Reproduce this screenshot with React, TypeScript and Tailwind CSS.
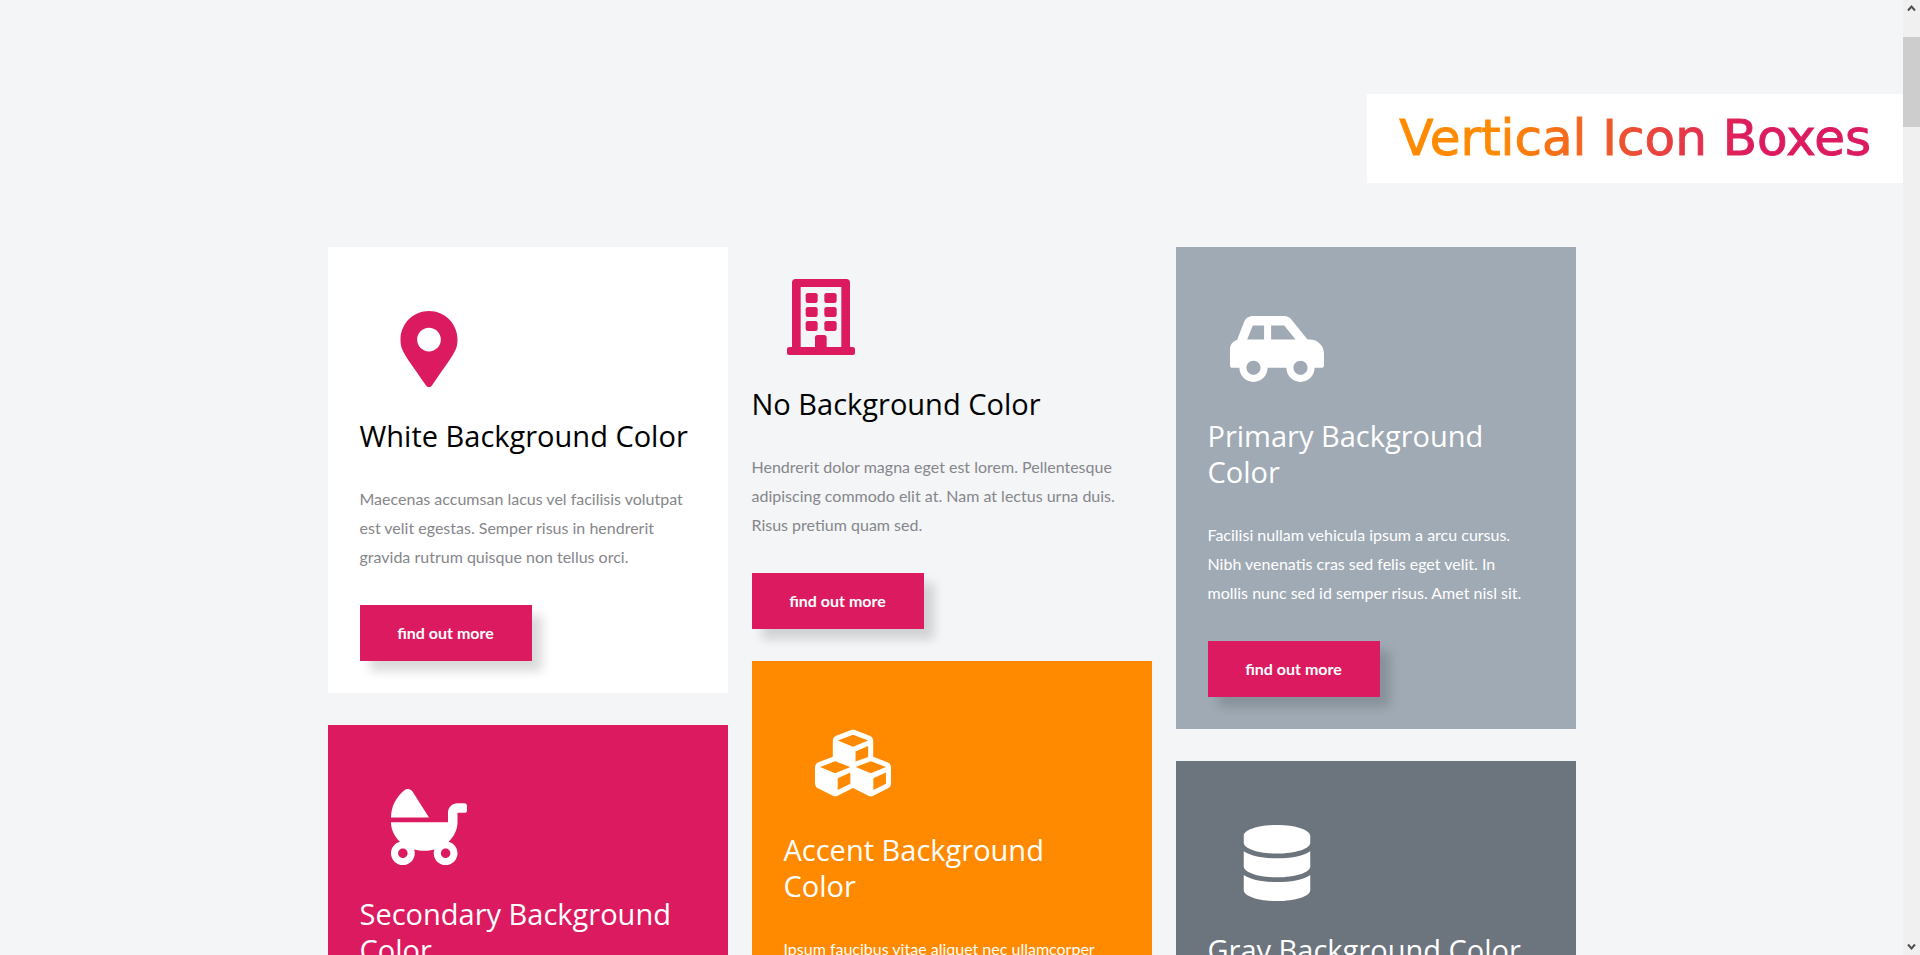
import type { ReactNode } from 'react';
import { FaBabyCarriage, FaCarSide, FaCubes, FaDatabase, FaMapMarkerAlt } from 'react-icons/fa';

type Box = {
  title: string;
  text: string;
  icon: ReactNode;
  card: string;
  iconColor: string;
  titleColor: string;
  textColor: string;
};

function BuildingIcon() {
  return (
    <svg viewBox="0 0 204 228" className="h-[76px] w-[68px]" fill="currentColor" aria-hidden="true">
      <path
        fillRule="evenodd"
        d="M26 0H178Q189 0 189 11V204H197Q204 204 204 211V222Q204 228 198 228H6Q0 228 0 222V211Q0 204 7 204H15V11Q15 0 26 0ZM41 24V204H84V176Q84 168 92 168H111Q119 168 119 176V204H163V24Z"
      />
      <rect x="56" y="42" width="36" height="30" rx="7" />
      <rect x="112" y="42" width="37" height="30" rx="7" />
      <rect x="56" y="84" width="36" height="30" rx="7" />
      <rect x="112" y="84" width="37" height="30" rx="7" />
      <rect x="56" y="126" width="36" height="30" rx="7" />
      <rect x="112" y="126" width="37" height="30" rx="7" />
    </svg>
  );
}

const faIcon = 'size-[76px]';

const columns: Box[][] = [
  [
    {
      title: 'White Background Color',
      text: 'Maecenas accumsan lacus vel facilisis volutpat est velit egestas. Semper risus in hendrerit gravida rutrum quisque non tellus orci.',
      icon: <FaMapMarkerAlt className={faIcon} />,
      card: 'bg-white p-8',
      iconColor: 'text-[#dc1a60]',
      titleColor: 'text-black',
      textColor: 'text-[#86868b]',
    },
    {
      title: 'Secondary Background Color',
      text: 'Sed vulputate odio ut enim blandit volutpat maecenas. Amet nisl purus in mollis nunc sed id semper.',
      icon: <FaBabyCarriage className={faIcon} />,
      card: 'bg-[#dc1a60] p-8',
      iconColor: 'text-white',
      titleColor: 'text-white',
      textColor: 'text-white',
    },
  ],
  [
    {
      title: 'No Background Color',
      text: 'Hendrerit dolor magna eget est lorem. Pellentesque adipiscing commodo elit at. Nam at lectus urna duis. Risus pretium quam sed.',
      icon: <BuildingIcon />,
      card: '',
      iconColor: 'text-[#dc1a60]',
      titleColor: 'text-black',
      textColor: 'text-[#86868b]',
    },
    {
      title: 'Accent Background Color',
      text: 'Ipsum faucibus vitae aliquet nec ullamcorper sit amet risus. Viverra orci sagittis eu volutpat odio.',
      icon: <FaCubes className={faIcon} />,
      card: 'bg-[#ff8a00] p-8',
      iconColor: 'text-white',
      titleColor: 'text-white',
      textColor: 'text-white',
    },
  ],
  [
    {
      title: 'Primary Background Color',
      text: 'Facilisi nullam vehicula ipsum a arcu cursus. Nibh venenatis cras sed felis eget velit. In mollis nunc sed id semper risus. Amet nisl sit.',
      icon: <FaCarSide className="h-[76px] w-[94px]" />,
      card: 'bg-[#9faab4] p-8',
      iconColor: 'text-white',
      titleColor: 'text-white',
      textColor: 'text-white',
    },
    {
      title: 'Gray Background Color',
      text: 'Turpis egestas pretium aenean pharetra magna ac placerat vestibulum lectus mauris ultrices.',
      icon: <FaDatabase className={faIcon} />,
      card: 'bg-[#6c747d] p-8',
      iconColor: 'text-white',
      titleColor: 'text-white',
      textColor: 'text-white',
    },
  ],
];

function IconBox({ box }: { box: Box }) {
  return (
    <article className={box.card}>
      <div className={`flex h-[139px] w-[138px] items-center justify-center pt-px ${box.iconColor}`}>{box.icon}</div>
      <h3 className={`font-['Open_Sans',sans-serif] text-[29px] leading-9 ${box.titleColor}`}>{box.title}</h3>
      <p className={`mt-[30px] mb-[34px] pr-2 text-base leading-[29px] ${box.textColor}`}>{box.text}</p>
      <a
        href="#"
        className="flex h-14 w-[172px] items-center justify-center bg-[#dc1a60] text-base font-bold text-white shadow-[10px_10px_10px_rgba(0,0,0,0.15)]"
      >
        find out more
      </a>
    </article>
  );
}

function ScrollRail() {
  return (
    <div className="flex w-[17px] shrink-0 flex-col items-center justify-between bg-[#f0f0f0]" aria-hidden="true">
      <div className="flex w-full flex-col items-center">
        <svg viewBox="0 0 17 17" className="mb-5 h-[17px] w-[17px]" fill="none" stroke="#505050" strokeWidth="2">
          <path d="M5 10.5 8.5 6.5 12 10.5" />
        </svg>
        <div className="h-[90px] w-full bg-[#cdcdcd]" />
      </div>
      <svg viewBox="0 0 17 17" className="h-[17px] w-[17px]" fill="none" stroke="#505050" strokeWidth="2">
        <path d="M5 6.5 8.5 10.5 12 6.5" />
      </svg>
    </div>
  );
}

export default function App() {
  return (
    <div className="flex h-screen overflow-hidden bg-[#f3f5f7] font-['Lato',sans-serif]">
      <main className="min-w-0 flex-1 pt-[94px]">
        <header className="mb-16 flex justify-end">
          <div className="bg-white px-8 py-4">
            <h2 className="bg-linear-to-r/srgb from-[#ff8a00] from-20% to-[#dc1a60] to-75% bg-clip-text font-['DejaVu_Sans',sans-serif] text-[50px] leading-[57px] font-normal text-transparent [-webkit-text-stroke:1px_transparent]">
              Vertical Icon Boxes
            </h2>
          </div>
        </header>
        <section className="mx-auto grid max-w-[1248px] grid-cols-3 gap-6">
          {columns.map((boxes) => (
            <div key={boxes[0].title} className="flex flex-col gap-8">
              {boxes.map((box) => (
                <IconBox key={box.title} box={box} />
              ))}
            </div>
          ))}
        </section>
      </main>
      <ScrollRail />
    </div>
  );
}
